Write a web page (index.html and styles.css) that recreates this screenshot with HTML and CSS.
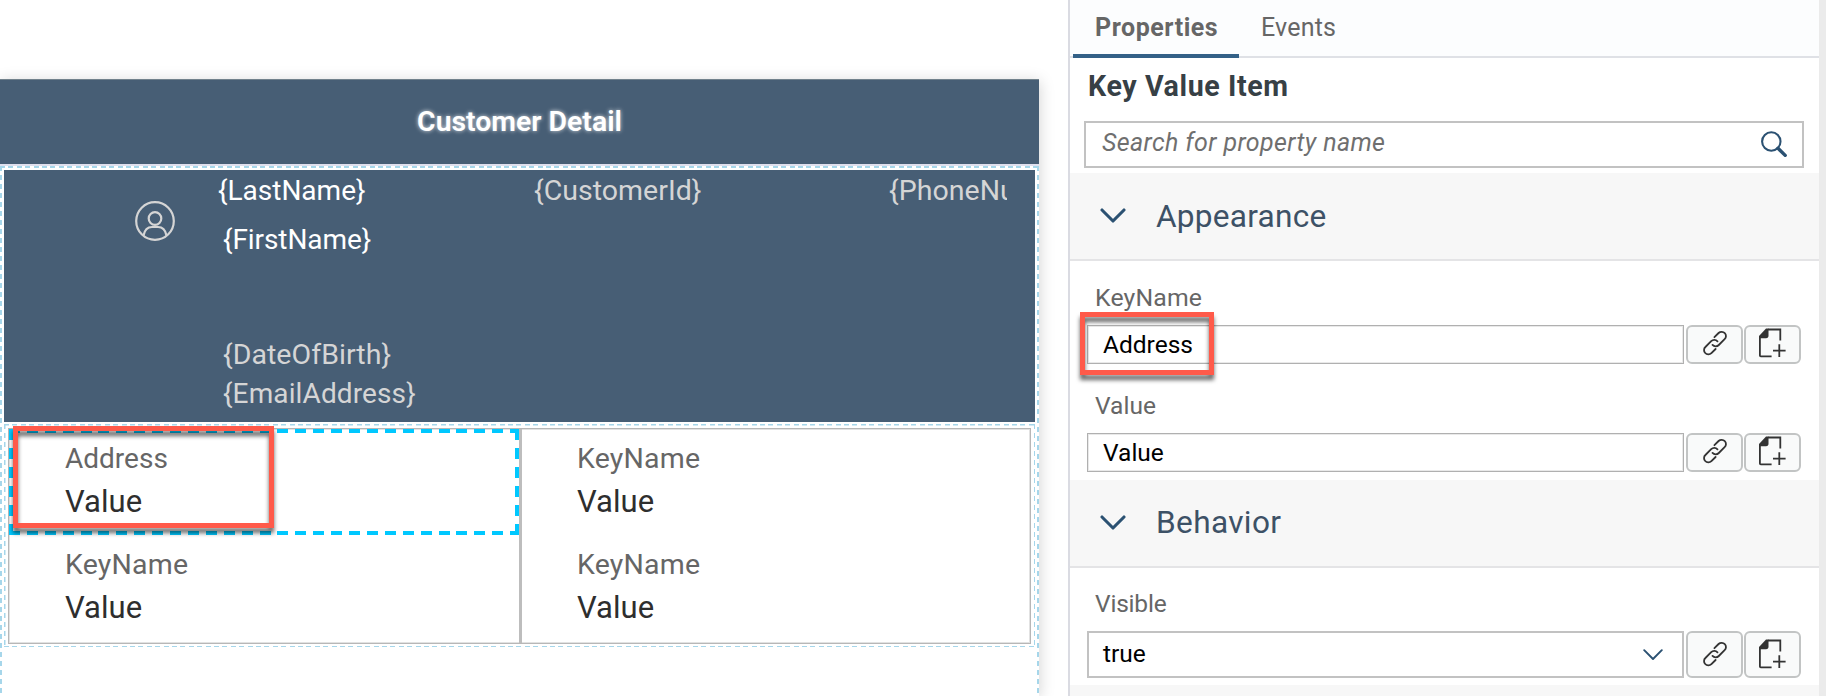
FILE: index.html
```html
<!DOCTYPE html>
<html lang="en">
<head>
<meta charset="utf-8">
<title>Customer Detail</title>
<link rel="stylesheet" href="styles.css">
</head>
<body>
<svg width="0" height="0" class="defs">
  <symbol id="link" viewBox="0 0 26 26">
    <g fill="none" stroke="#333" stroke-width="1.8" stroke-linecap="round">
      <path d="M12.4 7.2 L16.6 3 a4.3 4.3 0 0 1 6.2 0.2 a4.2 4.2 0 0 1 -.2 6 L16.8 15 a4.3 4.3 0 0 1 -6.3 -.1"/>
      <path d="M13.6 19 L9.4 23.2 a4.3 4.3 0 0 1 -6.2 -.2 a4.2 4.2 0 0 1 .2 -6 L9.2 11.2 a4.3 4.3 0 0 1 6.3 .1"/>
    </g>
  </symbol>
  <symbol id="newdoc" viewBox="0 0 28 30">
    <path d="M10 1.5 H22.3 V12.5 M13.6 28.3 H2.8 Q1.9 28.3 1.9 27.4 V9" fill="none" stroke="#333" stroke-width="1.8"/>
    <path d="M1 10.2 V8 L8 0.6 H10.5 V7.6 Q10.5 10.2 8 10.2 Z" fill="#333"/>
    <path d="M21.3 16.2 V29 M15 22.6 H27.6" fill="none" stroke="#333" stroke-width="1.8"/>
  </symbol>
</svg>
<main class="canvas">
  <section class="phone">
    <header class="title-bar"><h1 class="title">Customer Detail</h1></header>
    <div class="page dashes">
      <div class="object-header">
        <svg class="avatar" viewBox="0 0 40 40">
          <g fill="none" stroke="#d5d5d5" stroke-width="2.2">
            <circle cx="20" cy="20" r="18.8"/>
            <circle cx="20" cy="17.5" r="6.3"/>
            <path d="M8.5 34.5 C9.6 29 13 26 17 26 H23 C27 26 30.4 29 31.5 34.5"/>
          </g>
        </svg>
        <div class="col-name">
          <p class="t last">{LastName}</p>
          <p class="t first">{FirstName}</p>
          <p class="t dim dob">{DateOfBirth}</p>
          <p class="t dim email">{EmailAddress}</p>
        </div>
        <p class="t dim cust">{CustomerId}</p>
        <p class="t dim phone-no">{PhoneNumber}</p>
      </div>
      <div class="kv-wrap dashes">
        <div class="kv-grid">
          <div class="kv-cell selected"><p class="key addr">Address</p><p class="val">Value</p><span class="mark mark-cell"></span></div>
          <div class="kv-cell right"><p class="key">KeyName</p><p class="val">Value</p></div>
          <div class="kv-cell"><p class="key">KeyName</p><p class="val">Value</p></div>
          <div class="kv-cell right"><p class="key">KeyName</p><p class="val">Value</p></div>
        </div>
      </div>
    </div>
  </section>
</main>
<aside class="panel">
  <nav class="tabs"><span class="tab active">Properties</span><span class="tab">Events</span></nav>
  <h2 class="item-title">Key Value Item</h2>
  <div class="search"><span class="placeholder">Search for property name</span>
    <svg class="glass" viewBox="0 0 26 26"><circle cx="10.3" cy="10.5" r="9.2" fill="none" stroke="#2b5172" stroke-width="2.1"/><path d="M17 17.3 L24.2 24.4" stroke="#2b5172" stroke-width="3.4" stroke-linecap="round"/></svg>
  </div>
  <div class="band"><svg class="chev" viewBox="0 0 26 16"><path d="M2 2 L13 13 L24 2" fill="none" stroke="#2b5172" stroke-width="3.1" stroke-linecap="round" stroke-linejoin="round"/></svg><h3 class="band-title">Appearance</h3></div>
  <div class="group">
    <p class="label keyname">KeyName</p>
    <div class="row">
      <div class="input"><span>Address</span><i class="mark mark-input"></i></div>
      <button class="btn"><svg class="i-link"><use href="#link"/></svg></button>
      <button class="btn"><svg class="i-doc"><use href="#newdoc"/></svg></button>
    </div>
    <p class="label second">Value</p>
    <div class="row">
      <div class="input"><span>Value</span></div>
      <button class="btn"><svg class="i-link"><use href="#link"/></svg></button>
      <button class="btn"><svg class="i-doc"><use href="#newdoc"/></svg></button>
    </div>
  </div>
  <div class="band"><svg class="chev" viewBox="0 0 26 16"><path d="M2 2 L13 13 L24 2" fill="none" stroke="#2b5172" stroke-width="3.1" stroke-linecap="round" stroke-linejoin="round"/></svg><h3 class="band-title behavior">Behavior</h3></div>
  <div class="group last-group">
    <p class="label visible">Visible</p>
    <div class="row tall">
      <div class="input"><span>true</span><svg class="drop" viewBox="0 0 20 12"><path d="M1.2 1.2 L10 10 L18.8 1.2" fill="none" stroke="#2b5172" stroke-width="1.9" stroke-linecap="round" stroke-linejoin="round"/></svg></div>
      <button class="btn"><svg class="i-link"><use href="#link"/></svg></button>
      <button class="btn"><svg class="i-doc"><use href="#newdoc"/></svg></button>
    </div>
  </div>
  <div class="band next-band"></div>
</aside>
<div class="gutter"></div>
</body>
</html>
```
FILE: styles.css
```css
* { box-sizing: border-box; }
body {
  margin: 0; display: flex; width: 1826px; height: 696px; overflow: hidden;
  background: #fff; font-family: Roboto, "Liberation Sans", sans-serif;
}
h1, h2, h3, p { margin: 0; font-weight: 400; }
.defs { position: absolute; }

/* Design canvas */
.canvas { width: 1068px; height: 696px; padding-top: 79px; overflow: hidden; }
.phone { width: 1039px; height: 617px; box-shadow: 1px 2px 14px rgba(0, 0, 0, .17); background: #fff; }
.title-bar {
  height: 85px; display: flex; justify-content: center; align-items: flex-start; padding-top: 25px;
  background: #475e75; border-top: 1px solid #72828c;
}
.title {
  font-size: 28.4px; font-weight: 600; line-height: 34px; letter-spacing: 0;
  color: #fff; text-shadow: 0 0 4px rgba(255, 255, 255, .8);
}
.page { height: 532px; padding: 4px 4px 0; border-top: 2px solid #dfe0ee; }
.dashes {
  --c: #a6d6ea; --px: 8.4px; --py: 9px;
  background:
    repeating-linear-gradient(90deg, var(--c) 0 5px, transparent 5px var(--px)) 0 0 / 100% 2px no-repeat,
    repeating-linear-gradient(180deg, var(--c) 0 5px, transparent 5px var(--py)) 0 0 / 2px 100% no-repeat,
    repeating-linear-gradient(180deg, var(--c) 0 5px, transparent 5px var(--py)) 100% 0 / 2px 100% no-repeat;
}
.object-header {
  height: 252px; background: #475e75; padding: 4px 28px 0 131px; display: flex;
}
.avatar { width: 40px; height: 40px; margin-top: 27px; flex: none; }
.col-name { width: 317px; padding-left: 43px; flex: none; }
.t { font-size: 28px; line-height: 34px; color: #fff; white-space: nowrap; }
.dim { color: #d5d5d5; }
.first { margin: 15px 0 0 5px; letter-spacing: -.08px; }
.dob { margin: 81px 0 0 5px; font-size: 28.5px; letter-spacing: .05px; }
.email { margin: 5px 0 0 5px; letter-spacing: .12px; }
.cust { width: 355px; margin-left: 42px; font-size: 28.5px; letter-spacing: .03px; flex: none; }
.phone-no { overflow: hidden; width: 118px; font-size: 28.5px; letter-spacing: .05px; flex: none; }

.kv-wrap {
  height: 223px; margin-top: 2px; padding: 4px 4px 0;
  background:
    repeating-linear-gradient(90deg, var(--c) 0 5px, transparent 5px var(--px)) 0 0 / 100% 1.5px no-repeat,
    repeating-linear-gradient(90deg, var(--c) 0 5px, transparent 5px var(--px)) 0 100% / 100% 1.5px no-repeat,
    repeating-linear-gradient(180deg, var(--c) 0 5px, transparent 5px var(--py)) 0 0 / 1.5px 100% no-repeat,
    repeating-linear-gradient(180deg, var(--c) 0 5px, transparent 5px var(--py)) 100% 0 / 1.5px 100% no-repeat;
}
.kv-grid {
  height: 216px; border: 1px solid #b7b7b7; outline: 1px solid #e2e2e2; outline-offset: -2px;
  display: grid; grid-template-columns: 510px 1fr; grid-template-rows: 106px 1fr;
}
.kv-cell { position: relative; padding: 13px 0 0 56px; }
.kv-cell.right { border-left: 3px solid #bdbdbd; padding-left: 55px; }
.kv-cell.selected {
  background:
    repeating-linear-gradient(90deg, #00c8ff 0 11px, transparent 11px 17.9px) 0 0 / 100% 4px no-repeat,
    repeating-linear-gradient(90deg, #00c8ff 0 11px, transparent 11px 17.9px) 0 100% / 100% 4px no-repeat,
    repeating-linear-gradient(180deg, #00c8ff 0 11px, transparent 11px 19px) 0 0 / 4px 100% no-repeat,
    repeating-linear-gradient(180deg, #00c8ff 0 11px, transparent 11px 19px) 100% 0 / 4px 100% no-repeat;
}
.key { font-size: 28.5px; line-height: 34px; color: #666; letter-spacing: .2px; }
.key.addr { font-size: 28px; letter-spacing: 0; }
.val { font-size: 31px; line-height: 38px; margin-top: 7px; color: #2e2e2e; letter-spacing: .05px; }

/* Red highlight frames */
.mark { position: absolute; border: 5px solid #ff5a4a; filter: drop-shadow(0 5px 2px rgba(0, 0, 0, .6)); }
.mark-cell { left: 4px; top: -3px; width: 261px; height: 102px; z-index: 1; }
.mark-input { left: -8px; top: -14px; width: 134px; height: 63px; }

/* Properties panel */
.panel { width: 751px; border-left: 2px solid #dadbe2; }
.tabs { height: 58px; display: flex; background: #fcfdfe; border-bottom: 2px solid #dfe1e6; padding-left: 3px; }
.tab { height: 58px; padding: 13px 24px 0 22px; font-size: 25px; line-height: 30px; color: #666; letter-spacing: .2px; }
.tab.active { width: 166px; padding: 13px 0 0 22px; font-weight: 700; letter-spacing: .55px; border-bottom: 4px solid #346187; }
.item-title {
  font-size: 28.6px; font-weight: 700; line-height: 34px; letter-spacing: .6px; color: #374045;
  padding: 11px 0 0 18px; height: 63px;
}
.search {
  margin: 0 15px 5px 14px; height: 47px; border: 2px solid #c2c2c2; display: flex;
  justify-content: space-between; align-items: flex-start; padding: 5px 15px 0 16px;
}
.placeholder { font-size: 25px; line-height: 30px; font-style: italic; color: #6f6f6f; letter-spacing: .38px; }
.glass { width: 26px; height: 26px; margin-top: 3px; }
.band { height: 88px; background: #f7f7f7; border-bottom: 2px solid #e4e4e6; display: flex; padding-left: 30px; }
.chev { width: 26px; height: 16px; margin: 35px 30px 0 0; }
.band-title { font-size: 31.6px; line-height: 38px; margin-top: 25px; color: #3d5166; letter-spacing: .25px; }
.band-title.behavior { margin-top: 24px; letter-spacing: .35px; }
.group { height: 219px; padding: 22px 18px 0; }
.label { font-size: 24.5px; line-height: 30px; padding-left: 7px; color: #666; letter-spacing: .03px; }
.label.keyname { font-size: 24.8px; letter-spacing: .15px; }
.label.visible { letter-spacing: -.2px; }
.label.second { margin-top: 27px; }
.row { display: flex; height: 39px; margin-top: 12px; }
.input {
  position: relative; width: 597px; margin: 0 2px 0 -1px; border: 1px solid #b0b0b0;
  box-shadow: inset 0 0 0 1px #e9e9e9; flex: none;
  display: flex; justify-content: space-between; align-items: center;
  padding: 0 20px 0 15px; font-size: 24.5px; line-height: 30px; color: #000;
}
.btn {
  width: 57px; margin: 0 1px 0 0; padding: 0; background: #f9fafa; border: 2px solid #c2c4c4; border-radius: 6px;
  display: flex; justify-content: center; align-items: flex-start; flex: none;
}
.i-link { width: 26px; height: 26px; margin-top: 3px; }
.i-doc { width: 28px; height: 30px; margin: 1px 0 0 -2px; }
.last-group { height: 117px; padding-top: 21px; }
.tall { height: 47px; margin-top: 12px; }
.tall .input { border: 2px solid #c2c2c2; box-shadow: none; padding: 0 19px 2px 14px; }
.tall .i-link { margin-top: 8px; }
.tall .i-doc { margin-top: 6px; }
.drop { width: 20px; height: 12px; margin-top: 3px; }
.next-band { height: 11px; border: 0; }
.gutter { width: 7px; background: #ebebeb; }
```
